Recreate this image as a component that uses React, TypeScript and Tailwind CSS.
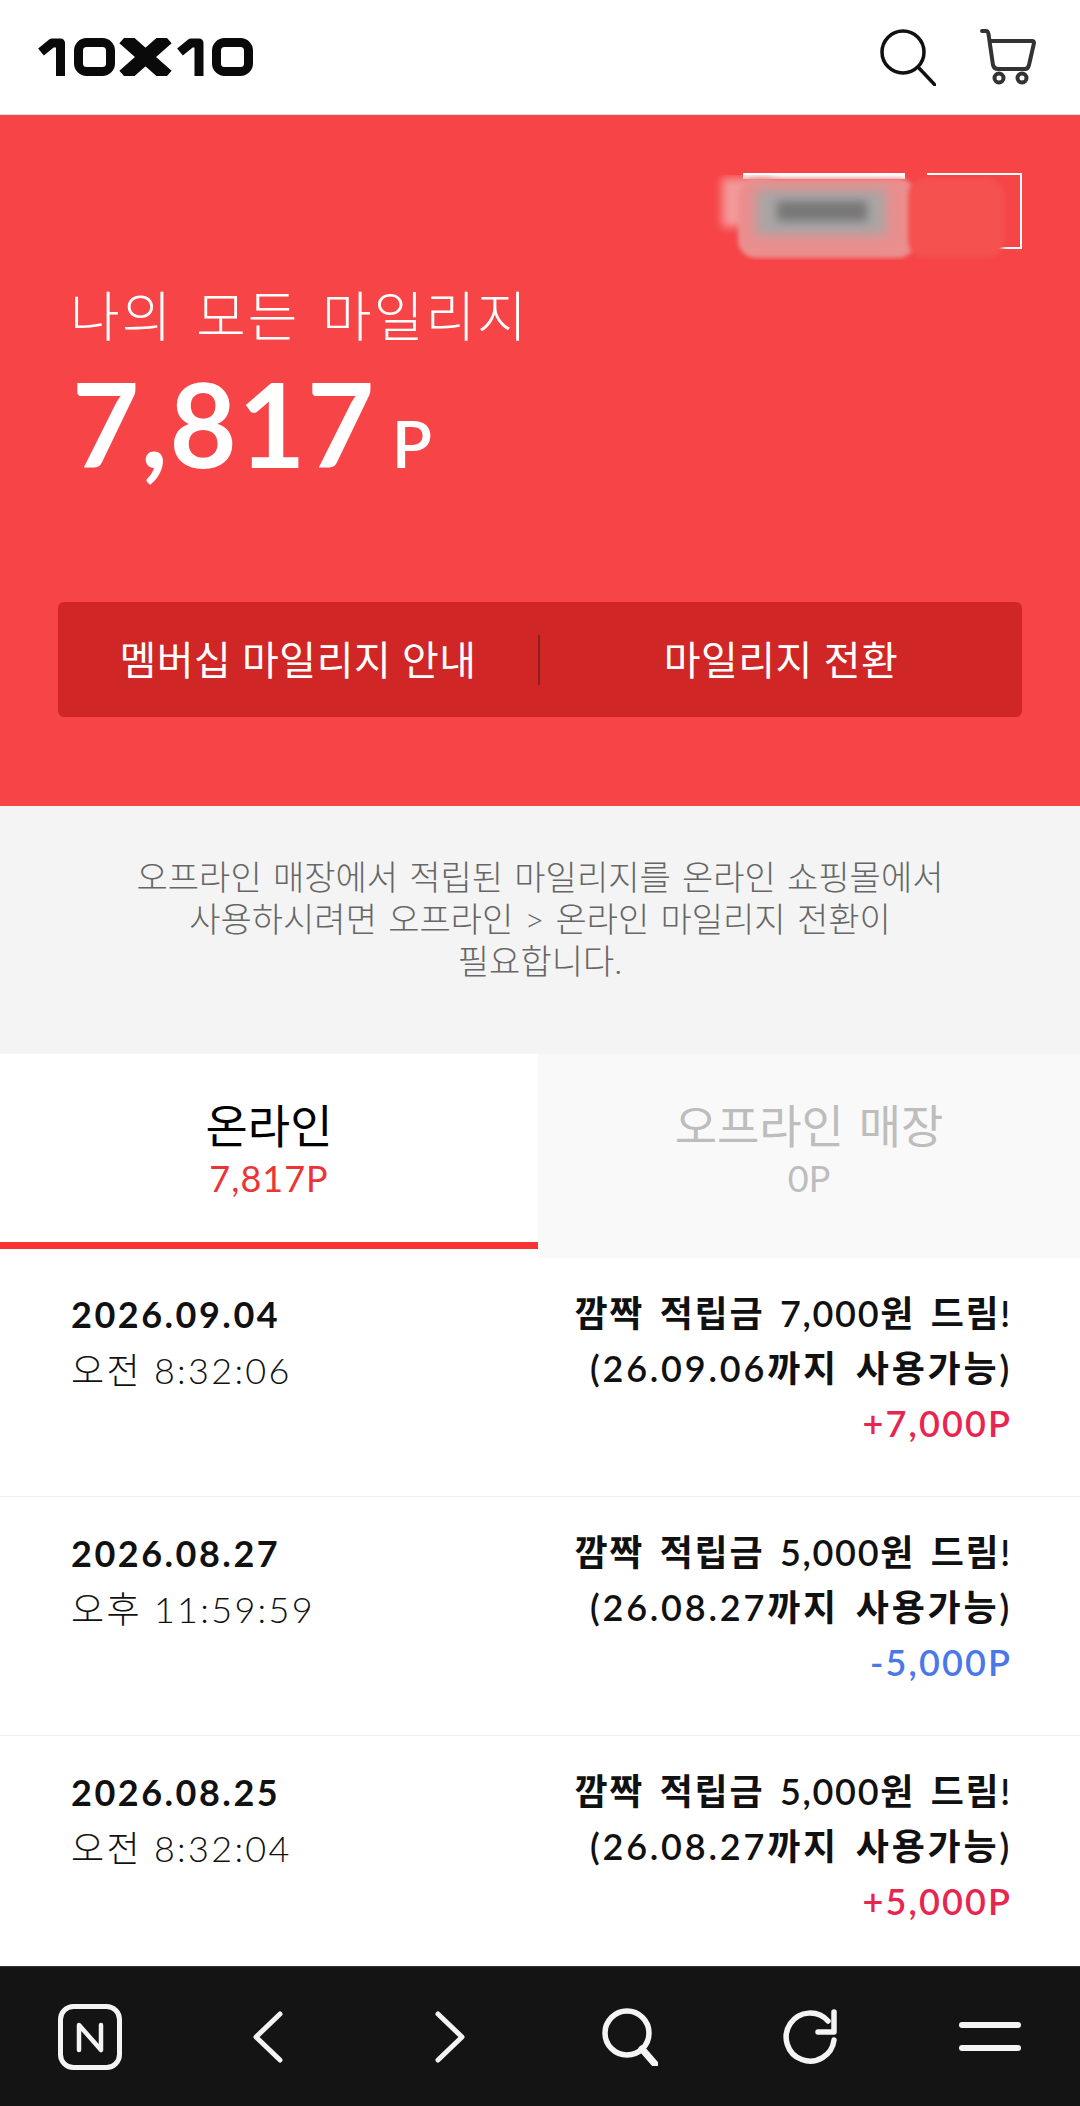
const FONT = "font-['Lato','Noto_Sans_CJK_KR',sans-serif]";

function Logo() {
  return (
    <svg width="216" height="38" viewBox="0 0 216 38" aria-label="10X10" fill="none" stroke="#0a0a0a" strokeWidth="9">
      <path d="M3 14 L14 5 H22.5 V38" strokeLinejoin="round" />
      <rect x="40.5" y="4.5" width="32" height="29" rx="8" />
      <path d="M86 0 L129 38 M129 0 L86 38" strokeWidth="14" />
      <path d="M142 14 L153 5 H161 V38" strokeLinejoin="round" />
      <rect x="178.5" y="4.5" width="32" height="29" rx="8" />
    </svg>
  );
}

function Row({ date, time, title, until, amount, color }: { date: string; time: string; title: string; until: string; amount: string; color: string }) {
  return (
    <div className="flex justify-between border-b border-[#efefef] pl-[71px] pr-[68px] h-[239px] pt-[28px] last:border-b-0">
      <div className="text-[#111] text-[36px] leading-[56px]">
        <div className="font-bold tracking-[2.5px]">{date}</div>
        <div className="font-light tracking-[2.3px]">{time}</div>
      </div>
      <div className="text-right text-[36px] leading-[55px] font-semibold text-[#111] [word-spacing:5px]">
        <div className="tracking-[1.7px]">{title}</div>
        <div className="tracking-[2.8px]">{until}</div>
        <div className={`tracking-[2.1px] ${color}`}>{amount}</div>
      </div>
    </div>
  );
}

export default function App() {
  return (
    <div className={`w-[1080px] h-[2106px] bg-white flex flex-col overflow-hidden ${FONT}`}>
      <header className="h-[115px] shrink-0 flex items-center justify-between pl-[38px] pr-[44px] border-b border-[#dddddd]">
        <Logo />
        <div className="flex items-center gap-[44px]">
          <svg width="56" height="58" viewBox="0 0 56 58" fill="none" stroke="#111" strokeWidth="3.5">
            <circle cx="23" cy="24" r="21" />
            <path d="M38 39 L55 57" strokeLinecap="round" />
          </svg>
          <svg width="56" height="58" viewBox="0 0 56 58" fill="none" stroke="#333" strokeWidth="4" strokeLinecap="round" strokeLinejoin="round">
            <path d="M2 3 H6 Q8 3 8.5 6 L13 37 Q14 41 18 41 H45 Q48 41 49 37 L54 15 Q54 13 52 13 H10" />
            <circle cx="19" cy="50" r="4.5" />
            <circle cx="42" cy="50" r="4.5" />
          </svg>
        </div>
      </header>

      <section className="relative h-[691px] shrink-0 bg-[#f64447] px-[58px] pt-[58px] text-white">
        <div className="flex justify-end gap-[22px] h-[76px]">
          <div className="w-[162px] h-[6px] bg-white" />
          <div className="w-[95px] h-[76px] border-2 border-white border-l-0" />
        </div>
        <div className="absolute left-[680px] top-[60px] w-[345px] h-[85px] overflow-hidden">
          <div className="absolute left-[42px] top-[3px] w-[50px] h-[49px] bg-[#f49a9b] blur-[5px]" />
          <div className="absolute left-[58px] top-[3px] w-[178px] h-[80px] rounded-[18px] bg-[#eb8e8e] blur-[2px]" />
          <div className="absolute left-[76px] top-[14px] w-[130px] h-[46px] bg-[#a9a5a5] blur-[6px]" />
          <div className="absolute left-[97px] top-[26px] w-[90px] h-[20px] bg-[#777777] blur-[5px]" />
          <div className="absolute left-[228px] top-[3px] w-[97px] h-[80px] rounded-[18px] bg-[#f4514f] blur-[2px]" />
        </div>
        <h1 className="mt-[33px] ml-[12px] text-[54px] leading-[70px] font-light tracking-[2px] [word-spacing:6px]">나의 모든 마일리지</h1>
        <div className="mt-[17px] ml-[14px] flex items-baseline leading-[110px]">
          <span className="text-[116px] font-bold tracking-[1.5px]">7,817</span>
          <span className="ml-[16px] text-[66px] font-semibold">P</span>
        </div>
        <div className="mt-[104px] h-[115px] rounded-[6px] bg-[#d12626] flex items-center text-[40px] font-normal tracking-[0.5px]">
          <div className="w-[480px] text-center">멤버십 마일리지 안내</div>
          <div className="w-[2px] h-[50px] bg-[#8e1f1f]" />
          <div className="flex-1 text-center">마일리지 전환</div>
        </div>
      </section>

      <section className="h-[248px] shrink-0 bg-[#f4f4f4] pt-[50px] flex flex-col items-center text-[34px] leading-[42px] font-light text-[#666] [word-spacing:2px]">
        <div>오프라인 매장에서 적립된 마일리지를 온라인 쇼핑몰에서</div>
        <div>사용하시려면 오프라인 &gt; 온라인 마일리지 전환이</div>
        <div>필요합니다.</div>
      </section>

      <div className="h-[204px] shrink-0 flex">
        <div className="w-[538px] h-[195px] bg-white border-b-[7px] border-[#f93335] flex flex-col items-center pt-[43px]">
          <div className="text-[46px] leading-[58px] text-black font-normal">온라인</div>
          <div className="text-[36px] leading-[46px] text-[#ec3436] font-normal tracking-[1px]">7,817P</div>
        </div>
        <div className="flex-1 bg-[#f9f9f9] flex flex-col items-center pt-[43px]">
          <div className="text-[46px] leading-[58px] text-[#bdbdbd] font-normal [word-spacing:3px]">오프라인 매장</div>
          <div className="text-[36px] leading-[46px] text-[#bdbdbd] font-normal">0P</div>
        </div>
      </div>

      <div className="flex-1 min-h-0 overflow-hidden">
        <Row date="2026.09.04" time="오전 8:32:06" title="깜짝 적립금 7,000원 드림!" until="(26.09.06까지 사용가능)" amount="+7,000P" color="text-[#e8254f]" />
        <Row date="2026.08.27" time="오후 11:59:59" title="깜짝 적립금 5,000원 드림!" until="(26.08.27까지 사용가능)" amount="-5,000P" color="text-[#4a78e8]" />
        <Row date="2026.08.25" time="오전 8:32:04" title="깜짝 적립금 5,000원 드림!" until="(26.08.27까지 사용가능)" amount="+5,000P" color="text-[#e8254f]" />
      </div>

      <nav className="h-[140px] shrink-0 bg-[#141414] border-t border-[#333] grid grid-cols-6 place-items-center text-[#f4f4f4]">
        <svg width="64" height="66" viewBox="0 0 64 66" fill="none" stroke="currentColor" strokeWidth="5">
          <rect x="2.5" y="2.5" width="59" height="61" rx="13" />
          <path d="M21 46 V21 L43 46 V21" strokeWidth="4.5" strokeLinecap="round" strokeLinejoin="round" />
        </svg>
        <svg width="30" height="52" viewBox="0 0 30 52" fill="none" stroke="currentColor" strokeWidth="5" strokeLinecap="round" strokeLinejoin="round" className="-translate-x-[2px]">
          <path d="M27 3 L3 26 L27 49" />
        </svg>
        <svg width="30" height="52" viewBox="0 0 30 52" fill="none" stroke="currentColor" strokeWidth="5" strokeLinecap="round" strokeLinejoin="round">
          <path d="M3 3 L27 26 L3 49" />
        </svg>
        <svg width="56" height="58" viewBox="0 0 56 58" fill="none" stroke="currentColor" strokeWidth="5.5">
          <circle cx="25" cy="25" r="22" />
          <path d="M40 41 L53 56" strokeWidth="7" strokeLinecap="round" />
        </svg>
        <svg width="54" height="56" viewBox="0 0 54 56" fill="none" stroke="currentColor" strokeWidth="5.5" strokeLinecap="round">
          <path d="M51 31 A24 24 0 1 1 45 12" />
          <path d="M51 3 V23 H35" strokeLinejoin="round" />
        </svg>
        <div className="w-[62px] flex flex-col gap-[17px]">
          <div className="h-[6px] rounded-full bg-[#f4f4f4]" />
          <div className="h-[6px] rounded-full bg-[#f4f4f4]" />
        </div>
      </nav>
    </div>
  );
}
